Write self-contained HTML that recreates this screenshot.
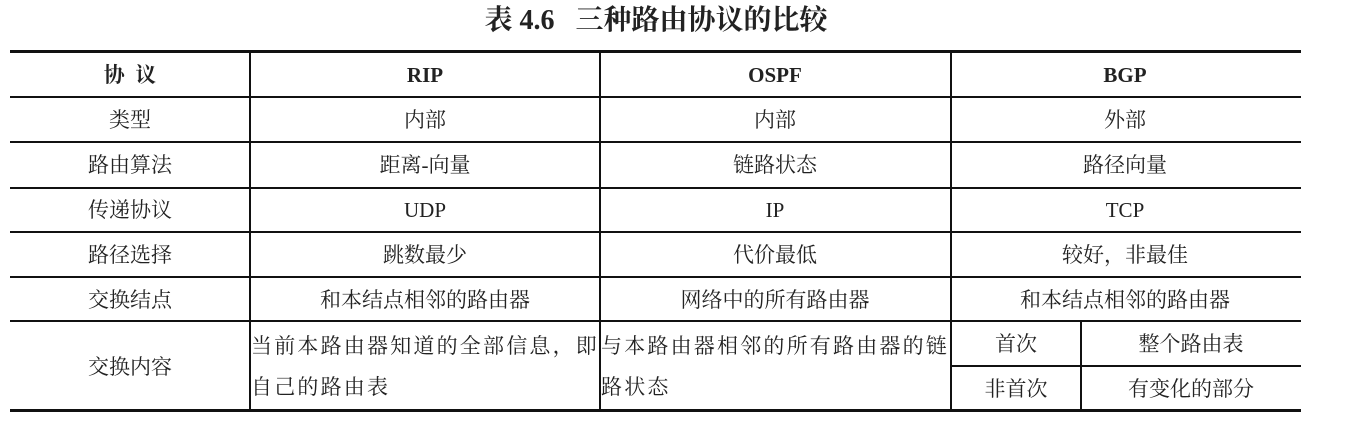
<!DOCTYPE html>
<html><head><meta charset="utf-8"><style>
body{margin:0;width:1345px;height:432px;background:#fff;position:relative;overflow:hidden;font-family:"Liberation Serif","Noto Serif CJK SC",serif;color:#222}
.h{position:absolute;background:#111;left:10px;width:1291px}
.v{position:absolute;background:#111;width:2px}
.t{position:absolute;font-size:21px;line-height:24px;text-align:center;white-space:nowrap}
</style></head><body>
<div class="t" style="left:0;width:1312px;top:5px;font-size:28px;font-weight:bold;line-height:32px">表 4.6&nbsp;&nbsp;&nbsp;三种路由协议的比较</div>
<div class="h" style="top:50px;height:3px"></div>
<div class="h" style="top:96px;height:2px"></div>
<div class="h" style="top:141px;height:2px"></div>
<div class="h" style="top:187px;height:2px"></div>
<div class="h" style="top:231px;height:2px"></div>
<div class="h" style="top:276px;height:2px"></div>
<div class="h" style="top:320px;height:2px"></div>
<div class="h" style="top:365px;height:2px;left:951px;width:350px"></div>
<div class="h" style="top:409px;height:3px"></div>
<div class="v" style="left:249px;top:52px;height:358px"></div>
<div class="v" style="left:599px;top:52px;height:358px"></div>
<div class="v" style="left:950px;top:52px;height:358px"></div>
<div class="v" style="left:1080px;top:321px;height:89px"></div>

<div class="t" style="left:10px;width:240px;top:63px;font-weight:bold">协&nbsp;&nbsp;议</div>
<div class="t" style="left:250px;width:350px;top:63px;font-weight:bold">RIP</div>
<div class="t" style="left:600px;width:350px;top:63px;font-weight:bold">OSPF</div>
<div class="t" style="left:950px;width:350px;top:63px;font-weight:bold">BGP</div>

<div class="t" style="left:10px;width:240px;top:108px">类型</div>
<div class="t" style="left:250px;width:350px;top:108px">内部</div>
<div class="t" style="left:600px;width:350px;top:108px">内部</div>
<div class="t" style="left:950px;width:350px;top:108px">外部</div>

<div class="t" style="left:10px;width:240px;top:153px">路由算法</div>
<div class="t" style="left:250px;width:350px;top:153px">距离-向量</div>
<div class="t" style="left:600px;width:350px;top:153px">链路状态</div>
<div class="t" style="left:950px;width:350px;top:153px">路径向量</div>

<div class="t" style="left:10px;width:240px;top:198px">传递协议</div>
<div class="t" style="left:250px;width:350px;top:198px">UDP</div>
<div class="t" style="left:600px;width:350px;top:198px">IP</div>
<div class="t" style="left:950px;width:350px;top:198px">TCP</div>

<div class="t" style="left:10px;width:240px;top:243px">路径选择</div>
<div class="t" style="left:250px;width:350px;top:243px">跳数最少</div>
<div class="t" style="left:600px;width:350px;top:243px">代价最低</div>
<div class="t" style="left:950px;width:350px;top:243px">较好，非最佳</div>

<div class="t" style="left:10px;width:240px;top:288px">交换结点</div>
<div class="t" style="left:250px;width:350px;top:288px">和本结点相邻的路由器</div>
<div class="t" style="left:600px;width:350px;top:288px">网络中的所有路由器</div>
<div class="t" style="left:950px;width:350px;top:288px">和本结点相邻的路由器</div>

<div class="t" style="left:10px;width:240px;top:355px">交换内容</div>
<div class="t" style="left:251px;top:334px;text-align:left;letter-spacing:2.2px">当前本路由器知道的全部信息，即</div>
<div class="t" style="left:251px;top:375px;text-align:left;letter-spacing:2.2px">自己的路由表</div>
<div class="t" style="left:601px;top:334px;text-align:left;letter-spacing:2.2px">与本路由器相邻的所有路由器的链</div>
<div class="t" style="left:601px;top:375px;text-align:left;letter-spacing:2.2px">路状态</div>
<div class="t" style="left:951px;width:130px;top:332px">首次</div>
<div class="t" style="left:1081px;width:220px;top:332px">整个路由表</div>
<div class="t" style="left:951px;width:130px;top:377px">非首次</div>
<div class="t" style="left:1081px;width:220px;top:377px">有变化的部分</div>
</body></html>
